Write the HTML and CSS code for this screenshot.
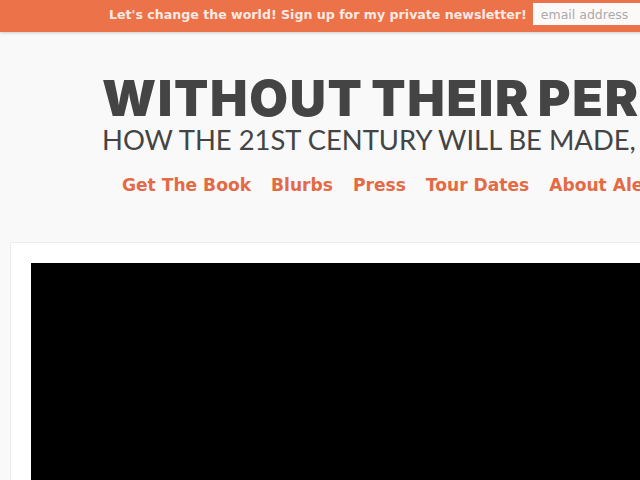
FILE: index.html
```html
<!DOCTYPE html>
<html>
<head>
<meta charset="utf-8">
<link rel="stylesheet" href="styles.css">
</head>
<body>
<div class="topbar">
  <span class="promo">Let's change the world! Sign up for my private newsletter!</span>
  <input class="email" type="text" placeholder="email address">
</div>
<header class="masthead">
  <h1 class="title">WITHOUT THEIR PERMISSION</h1>
  <p class="subtitle">HOW THE 21ST CENTURY WILL BE MADE, NOT MANAGED</p>
  <nav class="nav">
    <a href="#">Get The Book</a>
    <a href="#">Blurbs</a>
    <a href="#">Press</a>
    <a href="#">Tour Dates</a>
    <a href="#">About Alexis</a>
  </nav>
</header>
<main class="panel">
  <div class="video"></div>
</main>
</body>
</html>
```
FILE: styles.css
```css
html, body {
  margin: 0;
  padding: 0;
  overflow: hidden;
  background: #f9f9f9;
}
body {
  width: 640px;
  height: 480px;
}
.topbar {
  height: 32px;
  background: #ec724a;
  box-shadow: 0 1px 3px rgba(0,0,0,0.18);
  display: flex;
  align-items: center;
  padding: 0 0 4px 109px;
  gap: 6px;
  white-space: nowrap;
  width: 900px;
  box-sizing: border-box;
}
.promo {
  font-family: "DejaVu Sans", sans-serif;
  font-weight: bold;
  font-size: 12.6px;
  color: #fbe9e2;
}
.email {
  width: 150px;
  height: 22px;
  box-sizing: border-box;
  border: none;
  background: #fcfaf9;
  font-family: "DejaVu Sans", sans-serif;
  font-size: 12.5px;
  padding: 0 8px;
  margin-top: 0;
}
.email::placeholder { color: #aaa; }
.masthead {
  padding-left: 102px;
  white-space: nowrap;
  width: 1000px;
}
.title {
  margin: 38px 0 0;
  font-family: "Inter", sans-serif;
  font-weight: 900;
  font-size: 50px;
  line-height: 56px;
  color: #444;
  letter-spacing: 1.7px;
  word-spacing: -4px;
}
.subtitle {
  margin: 0;
  font-family: "Lato", sans-serif;
  font-weight: 400;
  font-size: 27.4px;
  line-height: 28px;
  color: #444;
}
.nav {
  display: flex;
  gap: 20px;
  margin: 21px 0 0 20px;
}
.nav a {
  font-family: "DejaVu Sans", sans-serif;
  font-weight: bold;
  font-size: 17.1px;
  color: #e46a45;
  text-decoration: none;
}
.panel {
  margin: 47px 0 0 10px;
  width: 1000px;
  background: #fff;
  border: 1px solid #ececec;
  padding: 20px;
  height: 400px;
}
.video {
  background: #000;
  height: 400px;
}
```
